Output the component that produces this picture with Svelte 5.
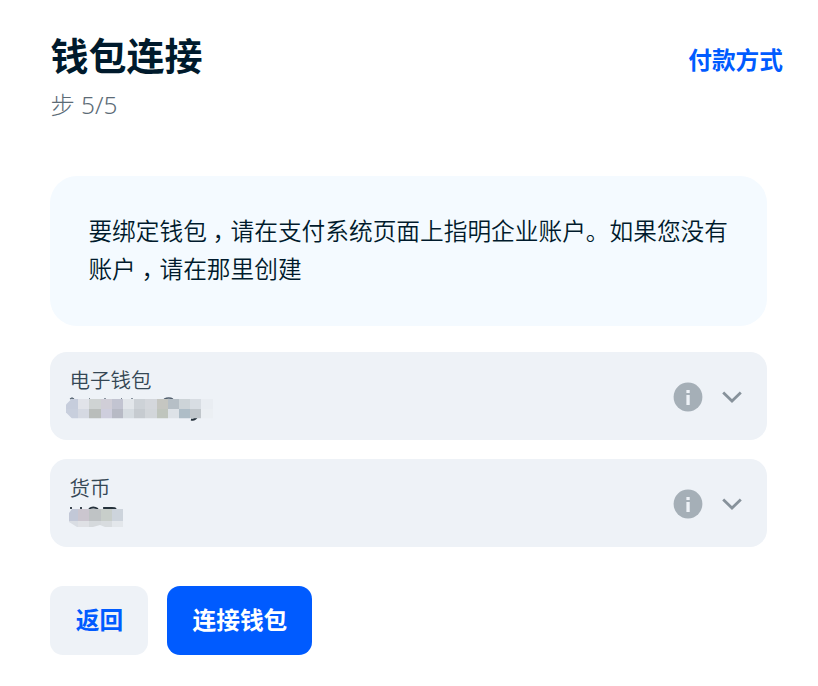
<script>
  const fields = [
    { id: 'wallet', label: '电子钱包' },
    { id: 'currency', label: '货币' }
  ];
  const top = ['#c6cddc', '#e1e3e9', '#cfd3d3', '#d0ced7', '#c2c4d1', '#e2e6ea', '#cdd2d7', '#d4d7dc', '#c5c6c1', '#b6bfc6', '#cdd4d8', '#d8dde3', '#e9edf2'];
  const bottom = ['#c8cfdd', '#d5d9e2', '#b9bdbb', '#cecedd', '#b7bac5', '#d6dce1', '#c6cbd0', '#d2d6da', '#bfc5bd', '#dde2e7', '#aebdc7', '#c0c6cb', '#ebeff3'];
  const currencyTop = ['#c2c8d7', '#cbc6cf', '#bfc3c5', '#c8ceca', '#cdd4dc'];
  const currencyBottom = ['#d9dde3', '#dfe1e5', '#d5d9dc', '#d8dcdf', '#e3e7eb'];
</script>

<main>
  <header>
    <div>
      <h1>钱包连接</h1>
      <p class="step">步 5/5</p>
    </div>
    <a href="#methods">付款方式</a>
  </header>

  <section class="notice">
    <div class="line">要绑定钱包<span class="comma">，</span>请在支付系统页面上指明企业账户。如果您没有</div>
    <div class="line">账户<span class="comma">，</span>请在那里创建</div>
  </section>

  <div class="fields">
    {#each fields as field}
      <div class="field">
        <div class="content">
          <span class="label">{field.label}</span>
          {#if field.id === 'wallet'}
            <svg class="mask" width="152" height="26" viewBox="0 1.5 152 26">
              <path d="M7 4.500l2-1 2 1M26 4.500h1M42 4.500V3.500M58 4.500h1M69 4.500V3.500M101 4.500q5-2 9 0" stroke="#52606e" stroke-width="1.3" fill="none" />
              <path d="M128 25q4 1 6-3" stroke="#26323c" stroke-width="2" fill="none" />
              <clipPath id="wallet-clip"><path d="M9 4H152V24H9L3 18V10Z" /></clipPath>
              <g clip-path="url(#wallet-clip)" shape-rendering="crispEdges">
                {#each top as color, i}
                  <rect x={4 + i * 11.2 - (i === 0 ? 3 : 0)} y="4" width={i === 0 ? 14.2 : 11.2} height="10" fill={color} />
                  <rect x={4 + i * 11.2 - (i === 0 ? 3 : 0)} y="14" width={i === 0 ? 14.2 : 11.2} height="10" fill={bottom[i]} />
                {/each}
              </g>
            </svg>
          {:else}
            <svg class="mask" width="152" height="26" viewBox="0 0 152 26">
              <path d="M8 3v2M18 3v2M26 5q4-3 9 0M41 5V4h8q3 0 4 1" stroke="#26323c" stroke-width="1.8" fill="none" />
              <clipPath id="currency-clip"><path d="M9 5H60V23H42L37 21 30 23H14L6 18V9Z" /></clipPath>
              <g clip-path="url(#currency-clip)" shape-rendering="crispEdges">
                {#each currencyTop as color, i}
                  <rect x={4 + i * 11.2} y="5" width="11.2" height="12" fill={color} />
                  <rect x={4 + i * 11.2} y="17" width="11.2" height="7" fill={currencyBottom[i]} />
                {/each}
              </g>
            </svg>
          {/if}
        </div>
        <svg class="info" width="30" height="30" viewBox="0 0 30 30">
          <circle cx="15" cy="15" r="14.4" fill="#a5afb7" />
          <path d="M13.4 8h3.3v3h-3.3zM13.4 13h3.3v10h-3.3z" fill="#eef2f7" />
        </svg>
        <svg class="chevron" width="22" height="14" viewBox="0 0 22 14">
          <path d="M2.2 2.5L11 11l8.800-8.500" fill="none" stroke="#87929b" stroke-width="2.8" />
        </svg>
      </div>
    {/each}
  </div>

  <footer>
    <button class="back">返回</button>
    <button class="connect">连接钱包</button>
  </footer>
</main>

<style>
  :global(body) { margin: 0; background: #fff; }
  main {
    box-sizing: border-box;
    width: 818px;
    height: 686px;
    padding: 29px 51px 0 50.4px;
    font-family: "Noto Sans CJK SC", sans-serif;
    font-size: 23.7px;
    color: #001a2c;
  }
  header {
    display: flex;
    justify-content: space-between;
    height: 146.5px;
    margin-right: -16px;
  }
  h1 { margin: 0; font-size: 38px; line-height: 50px; font-weight: 700; }
  .step {
    margin: 8px 0 0;
    font-family: "Noto Sans", "Noto Sans CJK SC", sans-serif;
    font-size: 24.4px;
    font-weight: 300;
    line-height: 36px;
    color: #5c6b76;
  }
  a { height: 36px; margin-top: 12px; line-height: 36px; font-weight: 700; color: #005bff; text-decoration: none; }
  .notice {
    box-sizing: border-box;
    height: 150.5px;
    padding: 35.5px 38px;
    border-radius: 27px;
    background: #f4faff;
    line-height: 38px;
    font-weight: 350;
  }
  .line { white-space: nowrap; }
  .comma { padding: 0 0.26em 0 0.24em; font-feature-settings: "halt"; }
  .fields { display: flex; flex-direction: column; gap: 19px; margin-top: 25.6px; }
  .field {
    box-sizing: border-box;
    display: flex;
    align-items: center;
    height: 88.4px;
    padding: 2px 24px 0 19px;
    border-radius: 17px;
    background: #eef2f7;
  }
  .content { display: flex; flex-direction: column; flex: 1; height: 57px; }
  .label { height: 28px; font-size: 20.5px; line-height: 22px; font-weight: 350; color: #354754; }
  .mask { margin-left: -6px; overflow: visible; }
  .chevron { margin-left: 18px; }
  footer { display: flex; gap: 19px; margin-top: 38.4px; }
  button {
    height: 69.5px;
    border: 0;
    padding: 0 0 4px;
    border-radius: 13px;
    font: 700 23.7px "Noto Sans CJK SC", sans-serif;
  }
  .back { width: 98px; background: #eef2f7; color: #005bff; }
  .connect { width: 145px; background: #005bff; color: #fff; }
</style>
